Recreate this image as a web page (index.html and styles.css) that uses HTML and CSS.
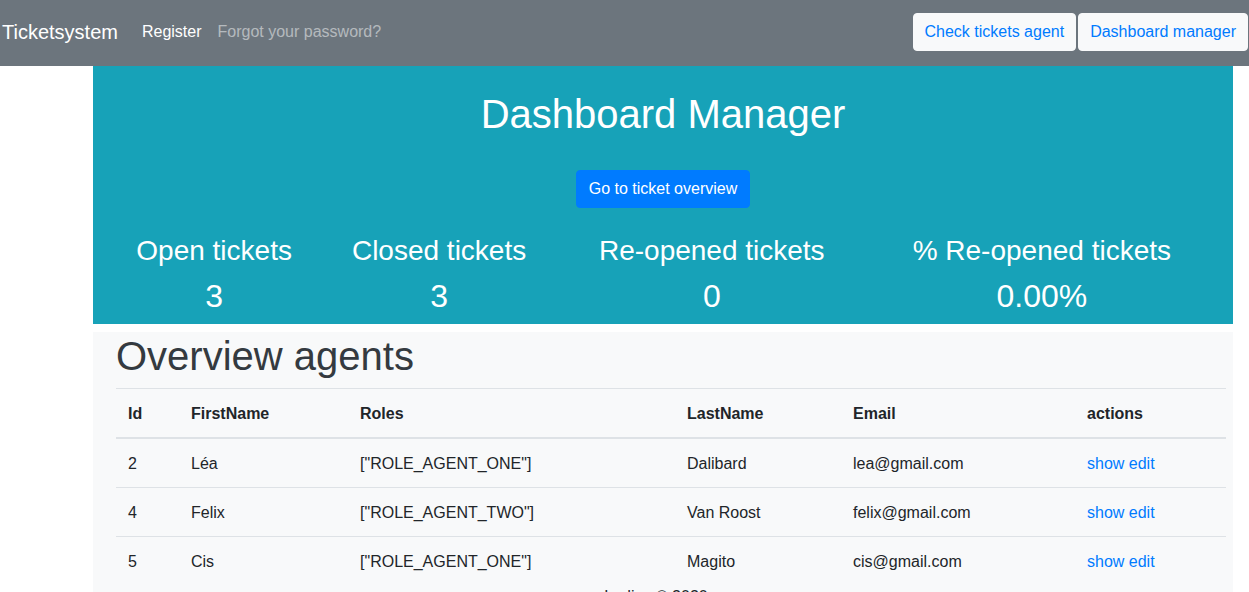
FILE: index.html
```html
<!DOCTYPE html>
<html lang="en">
<head>
<meta charset="utf-8">
<title>Dashboard Manager</title>
<link rel="stylesheet" href="styles.css">
</head>
<body>
<nav class="navbar">
  <a class="brand" href="#">Ticketsystem</a>
  <a class="nav-link active" href="#">Register</a>
  <a class="nav-link" href="#">Forgot your password?</a>
  <div class="nav-actions">
    <a class="btn btn-light" href="#">Check tickets agent</a>
    <a class="btn btn-light" href="#">Dashboard manager</a>
  </div>
</nav>
<main class="page">
  <section class="jumbotron">
    <h1 class="jumbo-title">Dashboard Manager</h1>
    <div class="jumbo-action"><a class="btn btn-primary" href="#">Go to ticket overview</a></div>
    <table class="stats">
      <tr>
        <th class="stat-label">Open tickets</th>
        <th class="stat-label">Closed tickets</th>
        <th class="stat-label">Re-opened tickets</th>
        <th class="stat-label">% Re-opened tickets</th>
      </tr>
      <tr>
        <td class="stat-value">3</td>
        <td class="stat-value">3</td>
        <td class="stat-value">0</td>
        <td class="stat-value">0.00%</td>
      </tr>
    </table>
  </section>
  <section class="agents">
    <h1 class="agents-title">Overview agents</h1>
    <table class="table">
      <thead>
        <tr>
          <th class="c-id">Id</th>
          <th class="c-first">FirstName</th>
          <th class="c-roles">Roles</th>
          <th class="c-last">LastName</th>
          <th class="c-email">Email</th>
          <th class="c-actions">actions</th>
        </tr>
      </thead>
      <tbody>
        <tr><td>2</td><td>Léa</td><td>["ROLE_AGENT_ONE"]</td><td>Dalibard</td><td>lea@gmail.com</td><td><a href="#">show</a> <a href="#">edit</a></td></tr>
        <tr><td>4</td><td>Felix</td><td>["ROLE_AGENT_TWO"]</td><td>Van Roost</td><td>felix@gmail.com</td><td><a href="#">show</a> <a href="#">edit</a></td></tr>
        <tr><td>5</td><td>Cis</td><td>["ROLE_AGENT_ONE"]</td><td>Magito</td><td>cis@gmail.com</td><td><a href="#">show</a> <a href="#">edit</a></td></tr>
      </tbody>
    </table>
    <footer class="footer">Ladies © 2020</footer>
  </section>
</main>
</body>
</html>
```

FILE: styles.css
```css
* { box-sizing: border-box; }
html, body { margin: 0; padding: 0; }
body {
  font-family: "Liberation Sans", Arial, sans-serif;
  font-size: 16px;
  line-height: 1.5;
  color: #212529;
  background: #fff;
}
a { text-decoration: none; color: #007bff; }

.navbar {
  display: flex;
  align-items: center;
  height: 66px;
  padding: 0 1px 2px 2px;
  background: #6c757d;
}
.brand {
  font-size: 20px;
  line-height: 30px;
  color: #fff;
  margin-right: 16px;
}
.nav-link {
  padding: 0 8px;
  color: rgba(255, 255, 255, 0.5);
}
.nav-link.active { color: #fff; }
.nav-actions {
  margin-left: auto;
  display: flex;
  gap: 2px;
}
.btn {
  display: inline-block;
  padding: 6px 12px;
  border: 1px solid transparent;
  border-radius: 4px;
  line-height: 24px;
  font-size: 16px;
}
.btn-light {
  background: #f8f9fa;
  border-color: #f8f9fa;
  color: #007bff;
}
.nav-actions .btn-light { padding: 6px 11px; }
.btn-primary {
  background: #007bff;
  border-color: #007bff;
  color: #fff;
}

.page {
  width: 1140px;
  margin-left: 93px;
}
.jumbotron {
  background: #17a2b8;
  color: #fff;
  padding: 24px 15px 1px;
  text-align: center;
}
.jumbo-title {
  margin: 0 0 32px;
  font-size: 40px;
  font-weight: 400;
  line-height: 48px;
}
.jumbo-action { margin-bottom: 26px; }
.stats {
  width: 100%;
  border-collapse: collapse;
}
.stat-label {
  padding: 0 0 9px;
  font-size: 28px;
  font-weight: 400;
  line-height: 34px;
}
.stat-value {
  padding: 0 0 8px;
  font-size: 32px;
  line-height: 38px;
}

.agents {
  margin-top: 8px;
  background: #f8f9fa;
  padding: 0 7px 10px 23px;
}
.agents-title {
  margin: 0 0 9px;
  font-size: 40px;
  font-weight: 400;
  line-height: 46px;
  padding-top: 1px;
  color: #343a40;
}
.table {
  width: 1110px;
  border-collapse: collapse;
  table-layout: fixed;
  text-align: left;
}
.table th, .table td {
  padding: 13px 12px 11px;
  border-top: 1px solid #dee2e6;
  vertical-align: top;
  line-height: 24px;
}
.table thead th {
  border-bottom: 2px solid #dee2e6;
  font-weight: 700;
}
.c-id { width: 63px; }
.c-first { width: 169px; }
.c-roles { width: 327px; }
.c-last { width: 166px; }
.c-email { width: 234px; }
.c-actions { width: 151px; }
.footer {
  text-align: center;
  padding-right: 30px;
  line-height: 24px;
}
```
